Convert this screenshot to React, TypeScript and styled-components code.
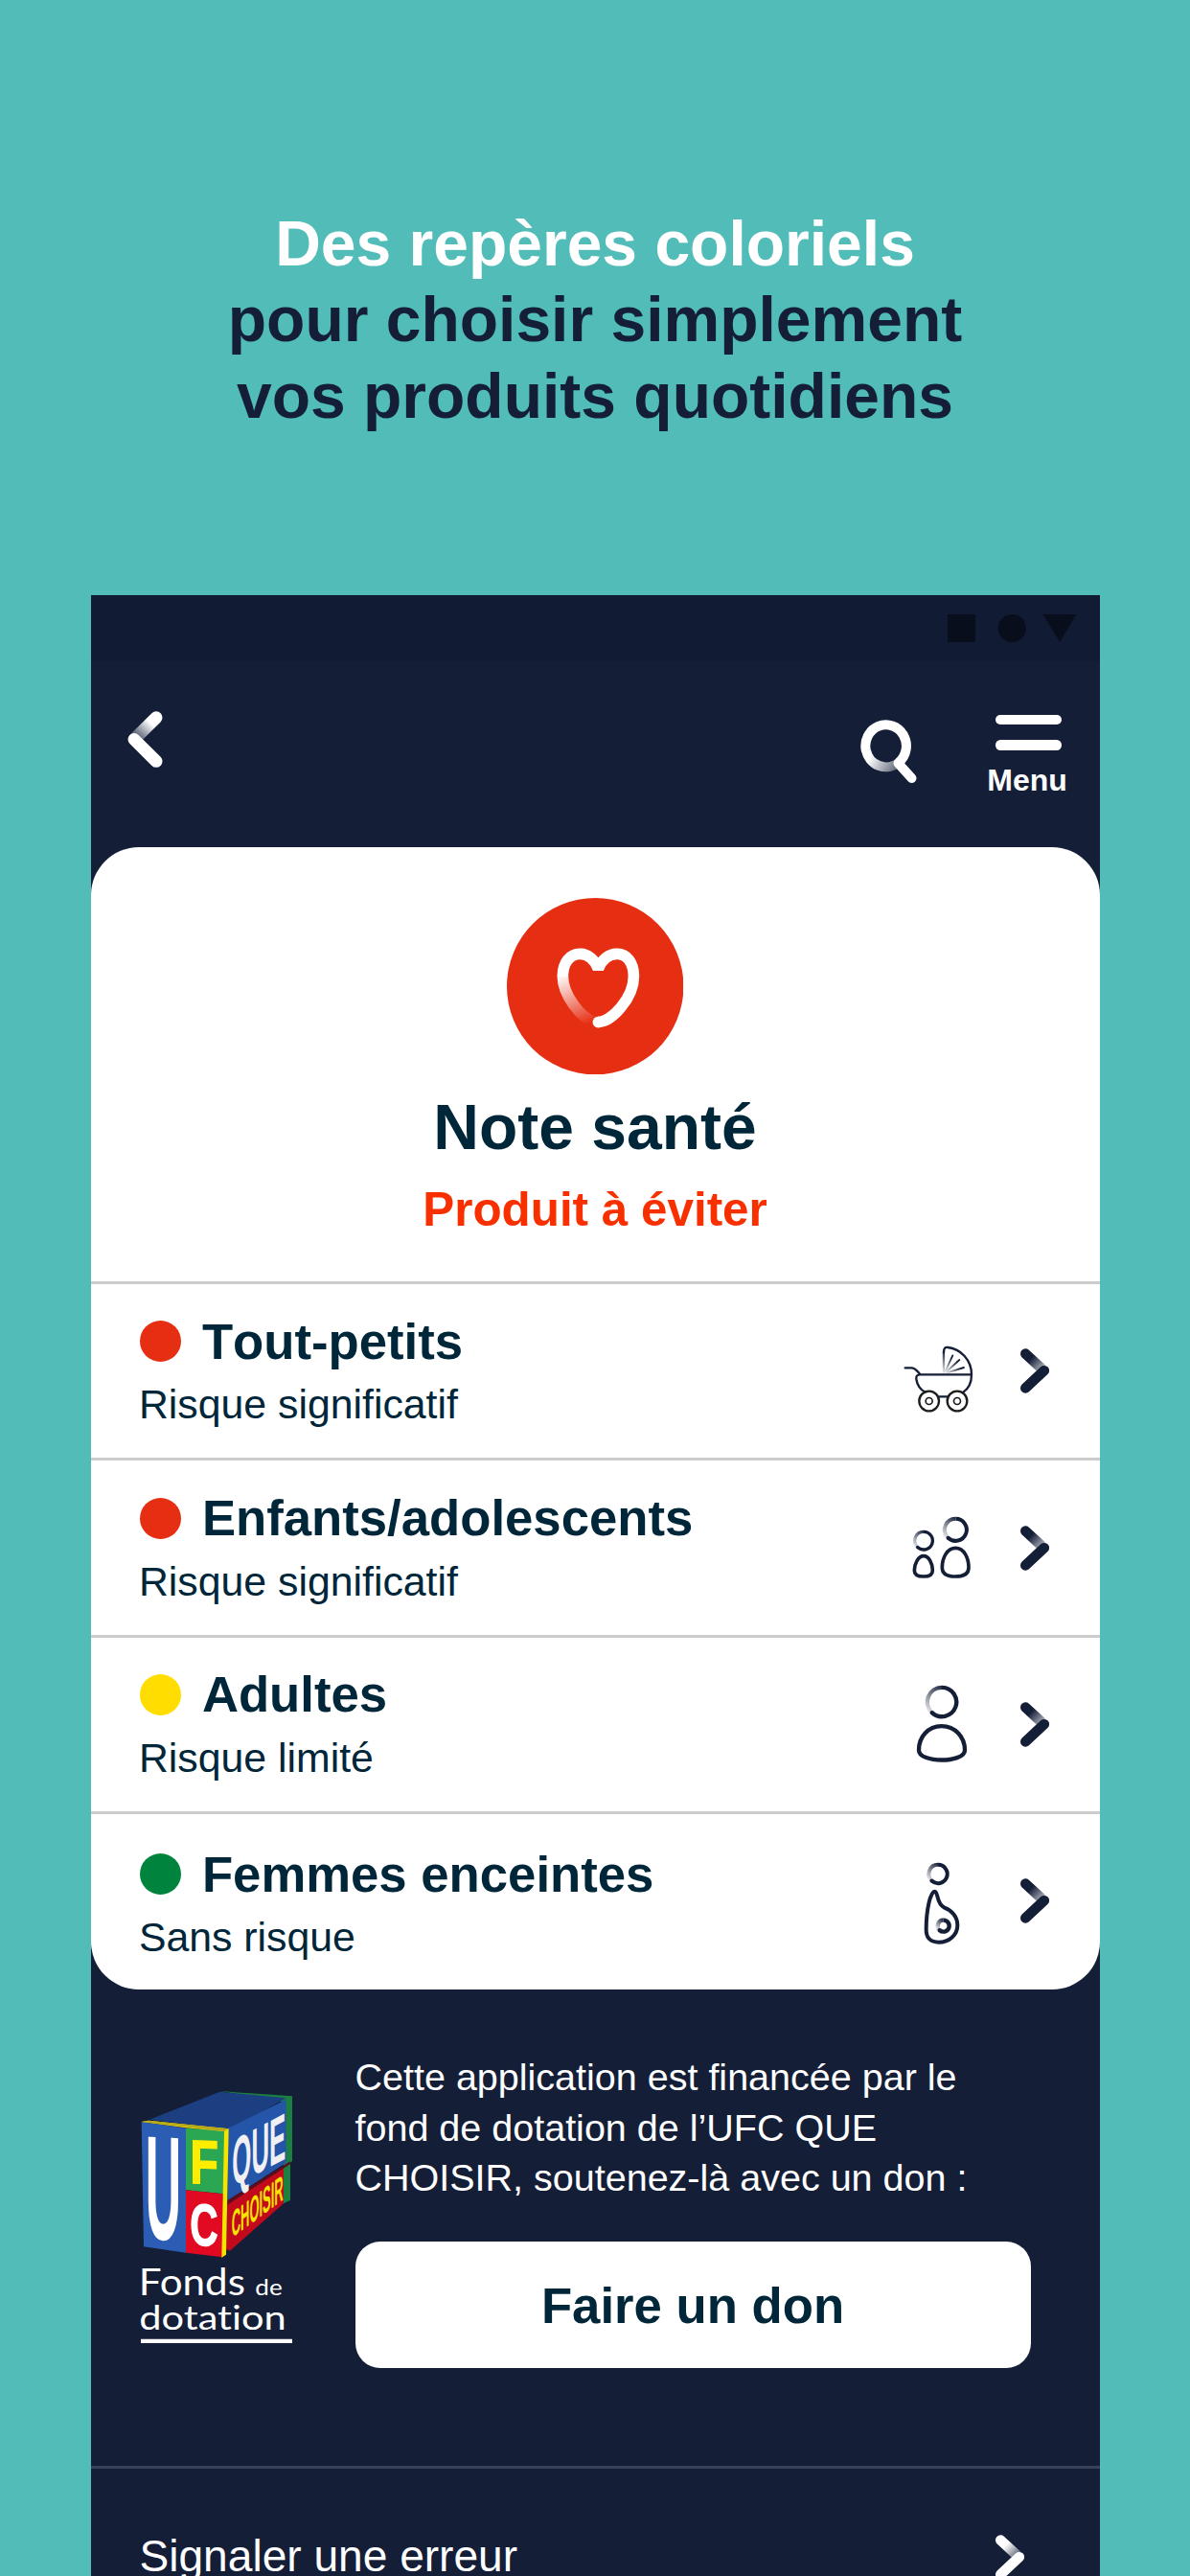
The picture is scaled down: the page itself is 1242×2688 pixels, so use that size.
import { ReactNode } from "react";
import styled, { createGlobalStyle } from "styled-components";

const NAVY = "#141e37";
const INK = "#002639";
const RED = "#e62e12";

const GlobalStyle = createGlobalStyle`
  * {
    box-sizing: border-box;
  }

  body {
    margin: 0;
    background: #52bdb8;
    font-family: "Liberation Sans", Arial, sans-serif;
  }

  svg {
    display: block;
    flex: none;
  }
`;

const Page = styled.div`
  width: 1242px;
  height: 2688px;
  overflow: hidden;
  display: flex;
  flex-direction: column;
  align-items: center;
  background: #52bdb8;
`;

const Headline = styled.h1`
  margin: 0;
  height: 621px;
  flex: none;
  padding-top: 214.5px;
  font-size: 66px;
  line-height: 79.6px;
  text-align: center;
  color: ${NAVY};

  span {
    display: block;
  }

  .light {
    color: #fff;
  }
`;

const Phone = styled.div`
  width: 1053px;
  flex: none;
  background: ${NAVY};
`;

const StatusBar = styled.div`
  height: 69px;
  padding: 20px 24px 0 0;
  display: flex;
  justify-content: flex-end;
  background: #111b33;
`;

const TopBar = styled.header`
  height: 194.3px;
  padding: 0 32px 0 38px;
  display: flex;
  align-items: flex-start;

  .back {
    margin: 52px auto 0 0;
  }

  .search {
    margin-top: 60px;
  }
`;

const MenuButton = styled.button`
  margin: 56px 0 0 74px;
  padding: 0;
  width: 84px;
  border: none;
  background: none;
  display: flex;
  flex-direction: column;
  align-items: center;
  gap: 16px;
  color: #fff;
  font: bold 32px/40px "Liberation Sans", Arial, sans-serif;

  i {
    width: 69px;
    height: 10.4px;
    border-radius: 5.2px;
    background: #fff;
  }

  span {
    margin: -5px 3px 0 0;
  }
`;

const Card = styled.main`
  border-radius: 50px;
  background: #fff;
  color: ${INK};
  overflow: hidden;
`;

const Score = styled.section`
  height: 452.7px;
  padding-top: 52.4px;
  display: flex;
  flex-direction: column;
  align-items: center;

  h2 {
    margin: 15.2px 0 0;
    font-size: 66px;
    line-height: 80px;
  }

  p {
    margin: 15.7px 0 0;
    font-size: 49.4px;
    line-height: 60px;
    font-weight: bold;
    color: #f83000;
  }
`;

const Row = styled.div<{ $last?: boolean }>`
  height: ${({ $last }) => ($last ? "186px" : "184.33px")};
  border-top: 3px solid #cccccc;
  padding: 0 53px 0 50.4px;
  display: flex;
  align-items: flex-start;
`;

const RowText = styled.div<{ $last?: boolean }>`
  flex: 1;
  padding-top: ${({ $last }) => ($last ? "33px" : "29.8px")};

  h3 {
    margin: 0;
    display: flex;
    align-items: center;
    gap: 22px;
    font-size: 52.7px;
    line-height: 60px;
    font-kerning: none;
  }

  p {
    margin: 10.5px 0 0;
    font-size: 42.8px;
    line-height: 50px;
  }
`;

const Dot = styled.span<{ $color: string }>`
  width: 43px;
  height: 43px;
  margin-left: 1px;
  border-radius: 50%;
  background: ${({ $color }) => $color};
`;

const RowIcons = styled.div`
  height: 181.6px;
  display: flex;
  align-items: center;
  gap: 32px;
`;

const Funding = styled.section`
  height: 497px;
  padding: 65px 72px 0 50.5px;
  display: flex;
  align-items: flex-start;

  > svg {
    margin: 39px 63.5px 0 0;
  }
`;

const FundingText = styled.div`
  flex: 1;

  p {
    margin: 0;
    font-size: 39.5px;
    line-height: 52.6px;
    color: #fff;
    white-space: nowrap;
  }
`;

const DonateButton = styled.button`
  width: 100%;
  height: 131.7px;
  margin-top: 40.5px;
  padding: 2px 0 0;
  border: none;
  border-radius: 26px;
  background: #fff;
  color: ${INK};
  font: bold 52.7px/60px "Liberation Sans", Arial, sans-serif;
`;

const ReportRow = styled.div`
  height: 180px;
  padding: 61px 78.5px 0 51px;
  border-top: 3px solid #374158;
  display: flex;
  justify-content: space-between;
  align-items: flex-start;
  font-size: 46.1px;
  line-height: 60px;
  color: #fff;

  svg {
    margin-top: 8px;
  }
`;

const Logo = styled.svg`
  overflow: visible;
  font-family: Lato, sans-serif;
  font-variant-ligatures: none;

  .block {
    font-family: "Liberation Sans", Arial, sans-serif;
    font-weight: bold;
  }
`;

interface ChevronProps {
  id: string;
  color: string;
}

const Chevron = ({ id, color }: ChevronProps) => (
  <svg width="30" height="47" viewBox="0 0 30 47" fill="none" strokeWidth="10.6" strokeLinecap="round">
    <linearGradient id={id} gradientUnits="userSpaceOnUse" x1="9" y1="9" x2="27" y2="26">
      <stop offset="0.1" stopColor={color} />
      <stop offset="1" stopColor={color} stopOpacity="0.1" />
    </linearGradient>
    <path d="M5.3 5.6L22 21" stroke={`url(#${id})`} />
    <path d="M24.8 23.2L5.3 41.4" stroke={color} />
  </svg>
);

const BackIcon = () => (
  <svg className="back" width="37" height="59" viewBox="0 0 37 59" fill="none" strokeWidth="13" strokeLinecap="round">
    <linearGradient id="back" gradientUnits="userSpaceOnUse" x1="29" y1="8" x2="7" y2="31">
      <stop offset="0.2" stopColor="#fff" />
      <stop offset="1" stopColor="#fff" stopOpacity="0.1" />
    </linearGradient>
    <path d="M30 6.8L9.5 27" stroke="url(#back)" />
    <path d="M7 29.5L30 52.3" stroke="#fff" />
  </svg>
);

const SearchIcon = () => (
  <svg className="search" width="60" height="68" viewBox="0 0 60 68" fill="none" strokeWidth="10">
    <linearGradient id="search" gradientUnits="userSpaceOnUse" x1="10" y1="34" x2="40" y2="52">
      <stop offset="0.1" stopColor="#fff" />
      <stop offset="1" stopColor="#fff" stopOpacity="0.3" />
    </linearGradient>
    <path d="M5.9 33A21.3 22 0 0 0 40 45.5" stroke="url(#search)" />
    <path d="M5.9 33.5A21.3 22 0 1 1 40 45.5" stroke="#fff" />
    <path d="M39.5 46.5L53.5 62" stroke="#fff" strokeLinecap="round" />
  </svg>
);

const StatusIcons = () => (
  <svg width="135" height="29" viewBox="0 0 135 29" fill="#080e1c">
    <path d="M0 0H29V29H0Z" />
    <circle cx="67.2" cy="14.5" r="14.6" />
    <path d="M99.5 0H134.5L117 29Z" />
  </svg>
);

const HeartBadge = () => (
  <svg width="184.4" height="184.4" viewBox="83 50 553 553" fill="none" strokeWidth="35">
    <linearGradient id="heart" gradientUnits="userSpaceOnUse" x1="262" y1="285" x2="330" y2="448">
      <stop offset="0" stopColor="#fff" />
      <stop offset="1" stopColor="#fff" stopOpacity="0" />
    </linearGradient>
    <circle cx="359.5" cy="326.5" r="276.5" fill={RED} />
    <path d="M258 295C258 350 312 425 358 438" stroke="url(#heart)" />
    <path
      d="M258 296C258 252 281 225 312 225C338 225 358 244 369 271C380 244 400 225 428 225C459 225 480 252 480 295C480 362 412 438 369 438"
      stroke="#fff"
      strokeLinejoin="bevel"
    />
    <circle cx="369" cy="438.5" r="17.5" fill="#fff" />
  </svg>
);

const StrollerIcon = () => (
  <svg width="100" height="100" viewBox="96 152 300 300" fill="none" stroke={NAVY} strokeWidth="7" strokeLinecap="round">
    <linearGradient id="hood" gradientUnits="userSpaceOnUse" x1="0" y1="235" x2="0" y2="305">
      <stop offset="0" stopColor={NAVY} />
      <stop offset="1" stopColor={NAVY} stopOpacity="0.1" />
    </linearGradient>
    <radialGradient id="spokes" gradientUnits="userSpaceOnUse" cx="254" cy="308" r="60">
      <stop offset="0.1" stopColor={NAVY} stopOpacity="0.1" />
      <stop offset="0.9" stopColor={NAVY} />
    </radialGradient>
    <path d="M252 305L251.8 240" stroke="url(#hood)" />
    <path d="M252 242C252 229 256 226 265 227C305 231 339 267 339 312C339 338 328 358 312 368" />
    <path d="M131 291H150C164 291 170 303 178 311M337 312H178C168 312 165 318 166 326C168 344 180 361 194 367M238 381H263" />
    <g stroke="url(#spokes)" strokeWidth="5.5">
      <path d="M256 304L280 252M257 306L301 266M260 307L315 290" />
    </g>
    <g stroke="#1d1d1b">
      <circle cx="206" cy="395" r="31" />
      <circle cx="294" cy="395" r="31" />
      <circle cx="206" cy="395" r="10.5" strokeWidth="5" />
      <circle cx="294" cy="395" r="10.5" strokeWidth="5" />
    </g>
  </svg>
);

interface HeadProps {
  id: string;
  cx: number;
  cy: number;
  r: number;
  width: number;
}

// Ring that fades out on its left side and ends on a round tip at the lower left
const Head = ({ id, cx, cy, r, width }: HeadProps) => {
  const tipX = cx - r * 0.68;
  const tipY = cy + r * 0.73;
  return (
    <g strokeWidth={width}>
      <linearGradient id={id} gradientUnits="userSpaceOnUse" x1={cx + r * 0.3} y1={cy - r} x2={cx - r} y2={cy + r * 0.6}>
        <stop offset="0" stopColor={NAVY} />
        <stop offset="1" stopColor={NAVY} stopOpacity="0.12" />
      </linearGradient>
      <path d={`M${tipX} ${tipY}A${r} ${r} 0 0 1 ${cx} ${cy - r}`} stroke={`url(#${id})`} />
      <path d={`M${cx} ${cy - r}A${r} ${r} 0 1 1 ${tipX} ${tipY}`} />
      <circle cx={tipX} cy={tipY} r={width / 2} fill={NAVY} stroke="none" />
    </g>
  );
};

const ChildrenIcon = () => (
  <svg width="100" height="100" viewBox="96 705 300 300" fill="none" stroke={NAVY} strokeWidth="11">
    <Head id="kid" cx={189} cy={833} r={28} width={10} />
    <Head id="teen" cx={289} cy={799} r={34.5} width={12} />
    <path d="M189 881C172 881 160 906 160 926C160 940 172 945 189 945C206 945 217 940 217 926C217 906 206 881 189 881Z" />
    <path d="M289 856C263 856 247 886 247 917C247 938 264 945 289 945C314 945 330 938 330 917C330 886 315 856 289 856Z" />
  </svg>
);

const AdultIcon = () => (
  <svg width="100" height="100" viewBox="96 148.5 300 300" fill="none" stroke={NAVY} strokeWidth="13">
    <Head id="adult" cx={246} cy={229.5} r={45.5} width={13} />
    <path d="M245 305C203 305 174 339 174 380C174 402 212 411 245 411C278 411 318 402 318 380C318 339 287 305 245 305Z" />
  </svg>
);

const PregnantIcon = () => (
  <svg width="100" height="100" viewBox="96 701 300 300" fill="none" stroke={NAVY} strokeWidth="12">
    <Head id="mother" cx={234} cy={765.5} r={29} width={12} />
    <path d="M224 820C210 820 197 878 197 940C197 966 212 979 236 979C270 979 295 955 295 926C295 900 277 879 254 871C228 859 235 820 224 820Z" />
    <Head id="baby" cx={251} cy={928} r={18} width={13} />
  </svg>
);

const FundLogo = () => (
  <Logo width="162" height="267" viewBox="45 60 486 801">
    <path d="M298 66L525 82V285L519 290V408L497 418V100Z" fill="#1c8040" />
    <path d="M78 155L298 68L506 88L330 186Z" fill="#1b3f80" />
    <path d="M322 184L506 92V290L322 410Z" fill="#2455a8" />
    <path d="M322 412L498 302V418L330 566L318 560Z" fill="#c20a1c" />
    <path d="M322 408L519 286V294L322 422Z" fill="#5a0d1c" />
    <path d="M53 162L192 182V572L60 553Z" fill="#2c5db5" />
    <path d="M192 182L312 190V388L192 376Z" fill="#2ba653" />
    <path d="M192 376L308 388V586L192 572Z" fill="#e20a22" />
    <path d="M53 162L75 158L326 184L318 578L304 587L312 192L192 181Z" fill="#f5e400" />
    <path d="M53 162L75 158L326 184L312 192Z" fill="#b8a91c" />
    <g className="block">
      <text transform="matrix(1.22 0.06 0 3.65 65 527)" fontSize="127" textLength="92" lengthAdjust="spacingAndGlyphs" fill="#fff">
        U
      </text>
      <text transform="matrix(1 0.04 0 1 205 354)" fontSize="194" textLength="89" lengthAdjust="spacingAndGlyphs" fill="#ffed00" stroke="#ffed00" strokeWidth="4">
        F
      </text>
      <text transform="matrix(1 0.05 0 1 205 547)" fontSize="184" textLength="88" lengthAdjust="spacingAndGlyphs" fill="#fff" stroke="#fff" strokeWidth="4">
        C
      </text>
      <text transform="matrix(1 -0.53 0 1 337 366)" fontSize="208" textLength="168" lengthAdjust="spacingAndGlyphs" fill="#f0f0f4">
        QUE
      </text>
      <text transform="matrix(1 -0.74 0 1 335 526)" fontSize="115" textLength="162" lengthAdjust="spacingAndGlyphs" fill="#f5e400">
        CHOISIR
      </text>
    </g>
    <g fill="#fff">
      <text x="44" y="706" fontSize="117" textLength="334" lengthAdjust="spacingAndGlyphs">
        Fonds
      </text>
      <text x="409" y="706" fontSize="70" textLength="85" lengthAdjust="spacingAndGlyphs">
        de
      </text>
      <text x="46" y="814" fontSize="106" textLength="460" lengthAdjust="spacingAndGlyphs">
        dotation
      </text>
    </g>
    <path d="M51 842H525V855H51Z" fill="#fff" />
  </Logo>
);

interface Audience {
  name: string;
  risk: string;
  color: string;
  icon: ReactNode;
}

const audiences: Audience[] = [
  { name: "Tout-petits", risk: "Risque significatif", color: RED, icon: <StrollerIcon /> },
  { name: "Enfants/adolescents", risk: "Risque significatif", color: RED, icon: <ChildrenIcon /> },
  { name: "Adultes", risk: "Risque limité", color: "#ffdd00", icon: <AdultIcon /> },
  { name: "Femmes enceintes", risk: "Sans risque", color: "#00843d", icon: <PregnantIcon /> },
];

const App = () => (
  <Page>
    <GlobalStyle />
    <Headline>
      <span className="light">Des repères coloriels</span>
      <span>pour choisir simplement</span>
      <span>vos produits quotidiens</span>
    </Headline>
    <Phone>
      <StatusBar>
        <StatusIcons />
      </StatusBar>
      <TopBar>
        <BackIcon />
        <SearchIcon />
        <MenuButton>
          <i />
          <i />
          <span>Menu</span>
        </MenuButton>
      </TopBar>
      <Card>
        <Score>
          <HeartBadge />
          <h2>Note santé</h2>
          <p>Produit à éviter</p>
        </Score>
        {audiences.map(({ name, risk, color, icon }, i) => {
          const last = i === audiences.length - 1;
          return (
            <Row key={name} $last={last}>
              <RowText $last={last}>
                <h3>
                  <Dot $color={color} />
                  {name}
                </h3>
                <p>{risk}</p>
              </RowText>
              <RowIcons>
                {icon}
                <Chevron id={`chevron-${i}`} color={NAVY} />
              </RowIcons>
            </Row>
          );
        })}
      </Card>
      <Funding>
        <FundLogo />
        <FundingText>
          <p>
            Cette application est financée par le
            <br />
            fond de dotation de l’UFC QUE
            <br />
            CHOISIR, soutenez-là avec un don :
          </p>
          <DonateButton>Faire un don</DonateButton>
        </FundingText>
      </Funding>
      <ReportRow>
        Signaler une erreur
        <Chevron id="chevron-report" color="#ffffff" />
      </ReportRow>
    </Phone>
  </Page>
);

export default App;
